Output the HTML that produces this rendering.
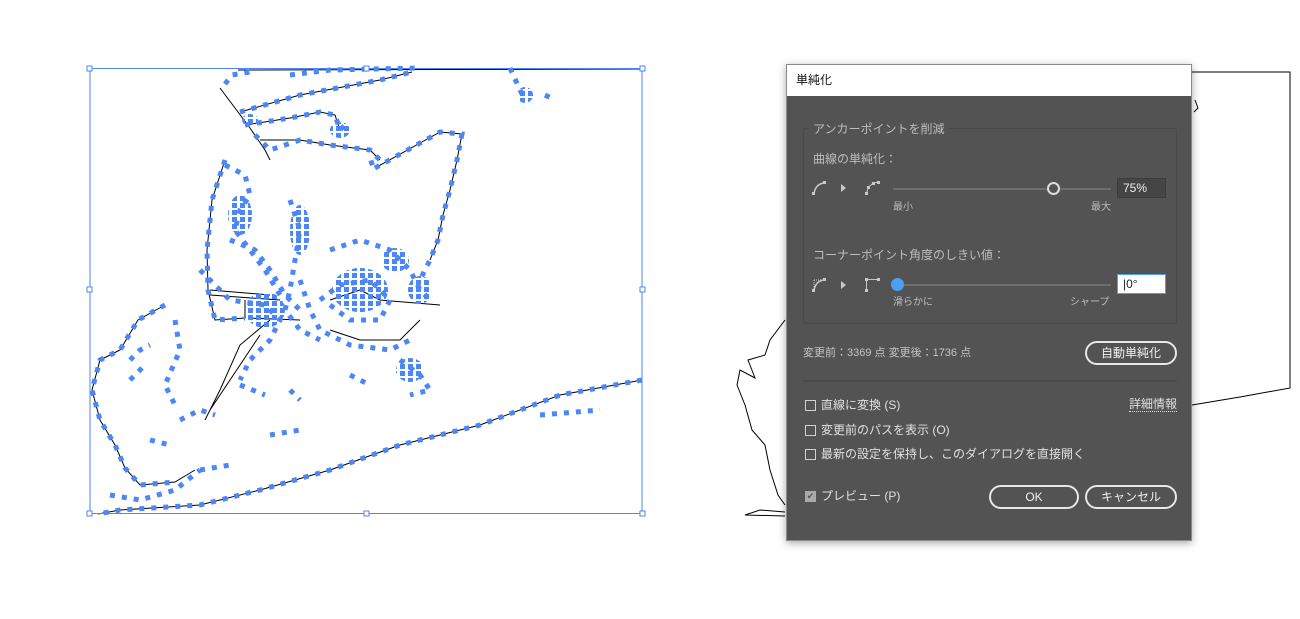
<!DOCTYPE html>
<html><head><meta charset="utf-8"><style>
body{margin:0;width:1300px;height:619px;background:#fff;position:relative;overflow:hidden;font-family:"Liberation Sans","Noto Sans CJK JP",sans-serif;}
svg.art{position:absolute;left:0;top:0}
.dlg{position:absolute;left:786px;top:64px;width:406px;height:477px;background:#535353;box-shadow:0 2px 8px rgba(0,0,0,.35);border:1px solid #8a8a8a;box-sizing:border-box}
.tb{position:absolute;left:0;top:0;width:404px;height:31px;background:#fff;font-size:12px;color:#111;line-height:31px;padding-left:9px;box-sizing:border-box}
.t{position:absolute;color:#cfcfcf;font-size:12px;white-space:nowrap;line-height:14px}
.s{font-size:10px;color:#bdbdbd}
.grp{position:absolute;left:16px;top:63px;width:374px;height:196px;border:1px solid #4a4a4a;border-radius:3px;box-sizing:border-box}
.trk{position:absolute;height:2px;background:#6e6e6e}
.in{position:absolute;width:49px;height:20px;box-sizing:border-box;font-size:12px;line-height:18px;padding-left:5px}
.btn{position:absolute;height:24px;border:2px solid #e8e8e8;border-radius:13px;box-sizing:border-box;color:#f0f0f0;font-size:12px;text-align:center;line-height:20px}
.cb{position:absolute;width:11px;height:11px;border:1px solid #d0d0d0;box-sizing:border-box}
.sep{position:absolute;left:16px;top:315px;width:374px;height:2px;background:#4a4a4a}
</style></head><body>
<svg class="art" width="1300" height="619" viewBox="0 0 1300 619">
<defs><pattern id="dots" width="8" height="7" patternUnits="userSpaceOnUse"><rect width="5" height="5" fill="#4d86f5"/></pattern></defs>
<g fill="none" stroke="#000" stroke-width="1">
<path d="M1192 72 L1290 72 L1290 388 L1240 397 L1192 405"/>
<path d="M785 320 L770 340 L765 355 L748 360 L755 378 L740 370 L737 385 L745 405 L752 430 L765 445 L770 470 L778 495 L785 505 M785 512 L760 510 L745 515 L785 516"/>
<path d="M1195 100 L1198 108 L1194 112"/>
<path d="M238 70 L642 69"/>
<path d="M220 88 L250 128 L265 150 L270 160"/>
<path d="M240 112 L300 95 L380 80 L412 72"/>
<path d="M245 125 L290 118 L320 112 L335 115 L340 130"/>
<path d="M260 140 L300 140 L330 145 L370 150 L380 160"/>
<path d="M375 168 L440 132 L462 134 L457 160 L450 190 L443 215 L438 240 L430 260"/>
<path d="M642 380 L560 395 L480 425 L400 445 L330 470 L260 490 L200 505 L120 510 L98 514"/>
<path d="M225 160 L212 200 L207 250 L208 290 L215 320 L245 318 L245 300"/>
<path d="M165 305 L138 320 L120 350 L100 360 L92 390 L100 420 L115 445 L125 468 L140 485 L175 482 L195 470"/>
<path d="M210 295 L280 300 M210 290 L270 295 M248 318 L300 320"/>
<path d="M270 320 L240 345 L220 390 L205 420 M260 335 L230 380 L210 410"/>
<path d="M330 300 L360 290 L380 300 L440 305 M330 330 L360 340 L400 340 L420 320"/>
</g>
<g fill="none" stroke="#4d86f5" stroke-width="5" stroke-dasharray="5 7">
<path d="M225 84 L232 75 L250 72"/>
<path d="M290 75 L330 70 L420 68 M510 68 L520 90 L525 100 M545 95 L555 100"/>
<path d="M240 112 L300 95 L380 80 L412 72"/>
<path d="M245 125 L290 118 L320 112 L335 115 L340 130 L345 125"/>
<path d="M255 135 L270 150 L300 140 L330 145 L370 150 L380 160 L365 165"/>
<path d="M375 168 L440 132 L462 134 L457 160 L450 190 L443 215 L438 240 L430 260 L420 280"/>
<path d="M642 380 L560 395 L480 425 L400 445 L330 470 L260 490 L200 505 L120 510 L98 514"/>
<path d="M225 160 L212 200 L207 250 L208 290 L215 320 L245 318"/>
<path d="M165 305 L138 320 L120 350 L100 360 L92 390 L100 420 L115 445 L125 468 L140 485 L175 482"/>
<path d="M225 165 L245 175 L250 195 L240 210 L235 230 L250 250 L265 270 L280 295"/>
<path d="M290 200 L300 230 L295 260 L290 290 L285 310 L300 330 L320 340"/>
<path d="M230 240 L255 250 L270 270 L285 295 L300 310"/>
<path d="M330 250 L360 240 L390 250 L410 270 L420 290 L430 300"/>
<path d="M300 280 L310 310 L320 330 L350 345 L390 350 L410 340"/>
<path d="M320 300 L340 285 L370 280 L390 300 L380 320 L350 320 L330 305"/>
<path d="M400 360 L420 375 L430 390 L410 395 M350 375 L370 385 M290 390 L300 400 M240 385 L265 395"/>
<path d="M130 360 L140 350 L150 345 M130 380 L145 365 M175 320 L180 350 L165 385 L175 405"/>
<path d="M200 270 L230 300 L265 305 L280 320 L270 340 L250 360 L240 380"/>
<path d="M180 420 L200 410 L215 415 M150 440 L170 445 M110 495 L140 500 L175 490 L200 470"/>
<path d="M560 390 M540 415 L600 410 M200 470 L230 465 M270 435 L300 430"/>
</g>
<g fill="url(#dots)">
<ellipse cx="360" cy="290" rx="28" ry="22"/><ellipse cx="265" cy="310" rx="20" ry="18"/>
<ellipse cx="395" cy="260" rx="14" ry="12"/><ellipse cx="420" cy="290" rx="12" ry="14"/>
<ellipse cx="250" cy="120" rx="8" ry="6"/><ellipse cx="525" cy="95" rx="8" ry="8"/>
<ellipse cx="240" cy="215" rx="12" ry="20"/><ellipse cx="300" cy="230" rx="10" ry="25"/>
<ellipse cx="410" cy="370" rx="14" ry="12"/><ellipse cx="340" cy="130" rx="10" ry="8"/>
</g>
<g fill="#fff" stroke="#4d86f5" stroke-width="1">
<rect x="90" y="68.5" width="552" height="445" fill="none"/>
<rect x="87" y="66" width="5" height="5"/><rect x="364" y="66" width="5" height="5"/><rect x="640" y="66" width="5" height="5"/>
<rect x="87" y="287" width="5" height="5"/><rect x="640" y="287" width="5" height="5"/>
<rect x="87" y="511" width="5" height="5"/><rect x="364" y="511" width="5" height="5"/><rect x="640" y="511" width="5" height="5"/>
</g>
</svg>

<div class="dlg">
<div class="tb">単純化</div>
<div class="grp"></div>
<div class="t" style="left:22px;top:57px;background:#535353;padding:0 4px;color:#bdbdbd">アンカーポイントを削減</div>
<div class="t" style="left:26px;top:87px;color:#bdbdbd">曲線の単純化：</div>
<svg style="position:absolute;left:24px;top:114px" width="50" height="18" fill="none" stroke="#c8c8c8" stroke-width="1.5">
<path d="M3 15 Q4 6 12 4"/><rect x="1" y="13" width="3" height="3" fill="#c8c8c8" stroke="none"/><rect x="12" y="2" width="3" height="3" fill="#c8c8c8" stroke="none"/>
<path d="M30 5 L35 9 L30 13 Z" fill="#c8c8c8" stroke="none"/>
</svg>
<svg style="position:absolute;left:77px;top:114px" width="20" height="18" fill="#c8c8c8">
<rect x="1" y="13" width="3" height="3"/><rect x="3" y="7" width="3" height="3"/><rect x="8" y="3" width="3" height="3"/><rect x="13" y="2" width="3" height="3"/>
<path d="M2.5 14 L4.5 8 L9.5 4 L14.5 3" stroke="#c8c8c8" fill="none"/>
</svg>
<div class="trk" style="left:106px;top:123px;width:218px"></div>
<div style="position:absolute;left:260px;top:117px;width:13px;height:13px;border:2px solid #ddd;border-radius:50%;box-sizing:border-box;background:#535353"></div>
<div class="in" style="left:330px;top:113px;background:#454545;border:1px solid #3c3c3c;color:#eee">75%</div>
<div class="t s" style="left:106px;top:136px">最小</div>
<div class="t s" style="left:304px;top:136px">最大</div>
<div class="t" style="left:26px;top:183px;color:#bdbdbd">コーナーポイント角度のしきい値：</div>
<svg style="position:absolute;left:24px;top:211px" width="50" height="18" fill="none" stroke="#c8c8c8" stroke-width="1.5">
<path d="M3 15 Q4 6 12 4"/><path d="M3 4 L3 13 M3 4 L12 4" stroke-width="1" stroke-dasharray="1 1"/><rect x="1" y="13" width="3" height="3" fill="#c8c8c8" stroke="none"/><rect x="12" y="2" width="3" height="3" fill="#c8c8c8" stroke="none"/>
<path d="M30 5 L35 9 L30 13 Z" fill="#c8c8c8" stroke="none"/>
</svg>
<svg style="position:absolute;left:77px;top:211px" width="20" height="18" fill="#c8c8c8">
<rect x="1" y="13" width="3" height="3"/><rect x="1" y="2" width="3" height="3"/><rect x="13" y="2" width="3" height="3"/>
<path d="M2.5 14 L2.5 3.5 L14.5 3.5" stroke="#c8c8c8" fill="none"/>
</svg>
<div class="trk" style="left:106px;top:219px;width:218px"></div>
<div style="position:absolute;left:104px;top:213px;width:13px;height:13px;border-radius:50%;background:#4b9ff5"></div>
<div class="in" style="left:330px;top:209px;background:#fff;border:1px solid #4b9ff5;color:#222">|0°</div>
<div class="t s" style="left:106px;top:231px">滑らかに</div>
<div class="t s" style="left:283px;top:231px">シャープ</div>
<div class="t" style="left:16px;top:281px;font-size:11px;color:#c4c4c4">変更前：3369 点 変更後：1736 点</div>
<div class="btn" style="left:298px;top:276px;width:92px">自動単純化</div>
<div class="sep"></div>
<div class="cb" style="left:18px;top:335px"></div><div class="t" style="left:34px;top:333px;color:#e0e0e0">直線に変換 (S)</div>
<div class="t" style="left:342px;top:333px;color:#e0e0e0;border-bottom:1px dotted #ddd;line-height:13px">詳細情報</div>
<div class="cb" style="left:18px;top:360px"></div><div class="t" style="left:34px;top:358px;color:#e0e0e0">変更前のパスを表示 (O)</div>
<div class="cb" style="left:18px;top:384px"></div><div class="t" style="left:34px;top:382px;color:#e0e0e0">最新の設定を保持し、このダイアログを直接開く</div>
<div class="cb" style="left:18px;top:426px;background:#aaa;border-color:#aaa;color:#555;font-size:9px;line-height:9px;text-align:center">✔</div>
<div class="t" style="left:34px;top:424px;color:#e0e0e0">プレビュー (P)</div>
<div class="btn" style="left:202px;top:420px;width:90px">OK</div>
<div class="btn" style="left:298px;top:420px;width:92px">キャンセル</div>
</div>
</body></html>
